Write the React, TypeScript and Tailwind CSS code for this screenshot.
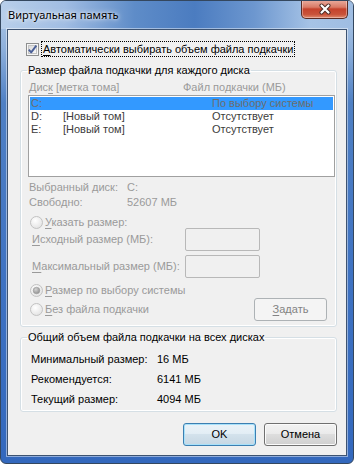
import React from "react";

const body = "font-['Liberation_Sans','Arial',sans-serif] text-[11px] leading-[13px]";

function U({ c }: { c: string }) {
  return <span className="underline decoration-1 underline-offset-[2px]">{c}</span>;
}

function Radio({ checked }: { checked?: boolean }) {
  return (
    <svg width="13" height="13" viewBox="0 0 13 13" className="shrink-0">
      <defs>
        <radialGradient id="rg" cx="0.4" cy="0.35" r="0.7">
          <stop offset="0" stopColor="#ffffff" />
          <stop offset="1" stopColor="#e2e2e2" />
        </radialGradient>
        <radialGradient id="rd" cx="0.4" cy="0.35" r="0.7">
          <stop offset="0" stopColor="#d4d4d4" />
          <stop offset="1" stopColor="#8c8c8c" />
        </radialGradient>
      </defs>
      <circle cx="6.5" cy="6.5" r="6" fill="url(#rg)" stroke="#c2c2c2" />
      {checked && <circle cx="6.5" cy="6.5" r="3.3" fill="url(#rd)" stroke="#9a9a9a" strokeWidth="0.6" />}
    </svg>
  );
}

function Checkbox() {
  return (
    <svg width="13" height="13" viewBox="0 0 13 13" className="shrink-0">
      <defs>
        <linearGradient id="cbg" x1="0" y1="0" x2="1" y2="1">
          <stop offset="0" stopColor="#d8d8d8" />
          <stop offset="1" stopColor="#fafafa" />
        </linearGradient>
      </defs>
      <rect x="0.5" y="0.5" width="12" height="12" fill="#f6f6f6" stroke="#8e8f8f" />
      <rect x="2.5" y="2.5" width="8" height="8" fill="url(#cbg)" stroke="#c4c4c4" />
      <path d="M2.8 6.6 L5.2 9.4 L10.3 2.6" stroke="#4a5f97" strokeWidth="1.9" fill="none" strokeLinejoin="round" />
    </svg>
  );
}

function WinButton({ children, kind }: { children: React.ReactNode; kind: "default" | "normal" | "disabled" }) {
  const cls =
    kind === "default"
      ? "border-[#3c7fb1] shadow-[inset_0_0_0_1px_#a8e1fa] bg-[linear-gradient(#eaf3f8_0%,#e3eef5_45%,#d3e2ec_50%,#c6d7e3_100%)] text-black"
      : kind === "normal"
      ? "border-[#707070] shadow-[inset_0_0_0_1px_#fbfbfb] bg-[linear-gradient(#f2f2f2_0%,#ebebeb_45%,#dddddd_50%,#cfcfcf_100%)] text-black"
      : "border-[#adb2b5] bg-[#f4f4f4] text-[#838383]";
  return (
    <div className={`w-[73px] h-[23px] rounded-[3px] border flex items-center justify-center ${cls}`}>
      {children}
    </div>
  );
}

function TextBox() {
  return <div className="w-[75px] h-[23px] rounded-[2px] border border-[#b8b8b8] bg-[#f0f0f0]" />;
}

export default function App() {
  return (
    <div className="w-[354px] h-[464px] rounded-[6px] border border-[#34475e] bg-[linear-gradient(#b3cbe7_0%,#8fb1dc_10%,#4f80c4_22%,#3e72c2_60%,#3368bd_100%)] flex flex-col overflow-hidden">
      <div className="h-[28px] shrink-0 flex items-start justify-between pl-[7px] pr-[5px] bg-[linear-gradient(90deg,#b8cfea_0%,#a1bde3_18%,#5e8cc8_38%,#4b7cc0_55%,#6d97cf_72%,#a6c3e6_88%,#9fbde2_100%)]">
        <div className="h-[28px] flex items-center font-['Noto_Sans','Open_Sans',sans-serif] text-[11px] text-black pt-[1px] [text-shadow:0_0_6px_#ffffff,0_0_3px_rgba(255,255,255,0.8)]">
          Виртуальная память
        </div>
        <div className="w-[47px] h-[19px] -mt-[1px] rounded-b-[5px] border border-t-0 border-[#5a2b24] bg-[linear-gradient(#eaaea0_0%,#d97a66_40%,#c5422c_50%,#c9533a_80%,#e08a6e_100%)] shadow-[inset_0_0_0_1px_rgba(255,255,255,0.35)] flex items-center justify-center">
          <svg width="14" height="12" viewBox="0 0 14 12">
            <path d="M3.5 2.5 L10.5 9.5 M10.5 2.5 L3.5 9.5" stroke="#4a2a24" strokeWidth="4" strokeLinecap="round" />
            <path d="M3.5 2.5 L10.5 9.5 M10.5 2.5 L3.5 9.5" stroke="#ffffff" strokeWidth="2.2" strokeLinecap="round" />
          </svg>
        </div>
      </div>
      <div className={`mx-[6px] mb-[7px] flex-1 border border-[#3d5371] bg-[#f0f0f0] shadow-[0_0_0_1px_rgba(255,255,255,0.45)] flex flex-col ${body} text-black`}>
        {/* auto checkbox */}
        <div className="mt-[11px] h-[16px] pl-[18px] flex items-center gap-[1px]">
          <Checkbox />
          <span className="ml-[1px] h-[16px] flex items-center px-[1px] border border-dotted border-black">
            <U c="А" />втоматически выбирать объем файла подкачки
          </span>
        </div>

        {/* group 1 */}
        <fieldset className="mt-[7px] ml-[12px] w-[317px] rounded-[3px] border border-[#d5dfe5] shadow-[inset_0_0_0_1px_#ffffff] pl-[7px] pr-[1px] pb-[5px]">
          <legend className="-ml-[1px] px-[1px] h-[13px]">Размер файла подкачки для каждого диска</legend>
          <div className="mt-[4px] h-[13px] grid grid-cols-[154px_1fr] pl-[1px] text-[#9a9a9a]">
            <span>
              Дис<U c="к" /> [метка тома]
            </span>
            <span>Файл подкачки (МБ)</span>
          </div>
          <div className="mt-[1px] w-[307px] h-[82px] border border-[#a0a0a0] bg-white p-[1px]">
            <div className="h-[13px] grid grid-cols-[32px_149px_1fr] pl-[1px] bg-[#3399ff] text-[#6d6d6d]">
              <span>C:</span>
              <span></span>
              <span>По выбору системы</span>
            </div>
            <div className="h-[13px] grid grid-cols-[32px_149px_1fr] pl-[1px] text-[#3c3c3c]">
              <span>D:</span>
              <span>[Новый том]</span>
              <span>Отсутствует</span>
            </div>
            <div className="h-[13px] grid grid-cols-[32px_149px_1fr] pl-[1px] text-[#3c3c3c]">
              <span>E:</span>
              <span>[Новый том]</span>
              <span>Отсутствует</span>
            </div>
          </div>
          <div className="mt-[4px] h-[13px] grid grid-cols-[98px_1fr] pl-[1px] text-[#9a9a9a]">
            <span>Выбранный диск:</span>
            <span>C:</span>
          </div>
          <div className="mt-[2px] h-[13px] grid grid-cols-[98px_1fr] pl-[1px] text-[#9a9a9a]">
            <span>Свободно:</span>
            <span>52607 МБ</span>
          </div>
          <div className="mt-[7px] h-[12px] flex items-center gap-[2px] pl-[2px] text-[#9a9a9a]">
            <Radio />
            <span>
              <U c="У" />казать размер:
            </span>
          </div>
          <div className="h-[23px] grid grid-cols-[153px_75px] items-center pl-[4px] text-[#9a9a9a]">
            <span>
              <U c="И" />сходный размер (МБ):
            </span>
            <TextBox />
          </div>
          <div className="mt-[4px] h-[23px] grid grid-cols-[153px_75px] items-center pl-[4px] text-[#9a9a9a]">
            <span>
              <U c="М" />аксимальный размер (МБ):
            </span>
            <TextBox />
          </div>
          <div className="mt-[6px] h-[13px] flex items-center gap-[2px] pl-[2px] text-[#9a9a9a]">
            <Radio checked />
            <span>
              <U c="Р" />азмер по выбору системы
            </span>
          </div>
          <div className="mt-[1px] h-[23px] flex items-center pl-[2px] pr-[8px] text-[#9a9a9a]">
            <div className="flex items-center gap-[2px]">
              <Radio />
              <span>
                <U c="Б" />ез файла подкачки
              </span>
            </div>
            <div className="ml-auto">
              <WinButton kind="disabled">
                <span>
                  <U c="З" />адать
                </span>
              </WinButton>
            </div>
          </div>
        </fieldset>

        {/* group 2 */}
        <fieldset className="mt-[4px] ml-[12px] w-[317px] rounded-[3px] border border-[#d5dfe5] shadow-[inset_0_0_0_1px_#ffffff] pl-[10px] pb-[2px]">
          <legend className="-ml-[4px] px-[1px] h-[13px]">Общий объем файла подкачки на всех дисках</legend>
          <div className="mt-[5px] h-[20px] grid grid-cols-[126px_1fr] items-center">
            <span>Минимальный размер:</span>
            <span>16 МБ</span>
          </div>
          <div className="h-[20px] grid grid-cols-[126px_1fr] items-center">
            <span>Рекомендуется:</span>
            <span>6141 МБ</span>
          </div>
          <div className="h-[20px] grid grid-cols-[126px_1fr] items-center">
            <span>Текущий размер:</span>
            <span>4094 МБ</span>
          </div>
        </fieldset>

        {/* buttons */}
        <div className="mt-[11px] flex justify-end gap-[8px] pr-[9px]">
          <WinButton kind="default">OK</WinButton>
          <WinButton kind="normal">Отмена</WinButton>
        </div>
      </div>
    </div>
  );
}
